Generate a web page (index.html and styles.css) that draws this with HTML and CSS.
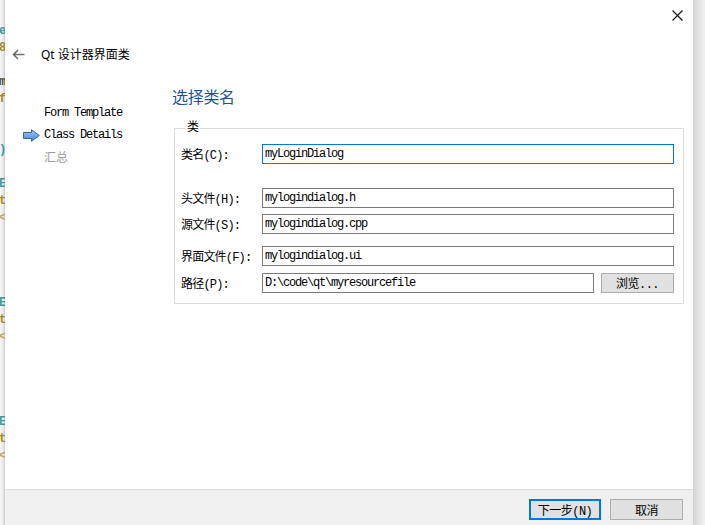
FILE: index.html
```html
<!DOCTYPE html>
<html lang="zh-CN">
<head>
<meta charset="utf-8">
<title>Qt 设计器界面类</title>
<link rel="stylesheet" href="styles.css">
</head>
<body>
<div class="screen">
  <div class="behind">
    <div class="code">
      <div class="ln c-blue">e</div>
      <div class="ln c-olive">8</div>
      <div class="ln"></div>
      <div class="ln c-dark">m</div>
      <div class="ln c-olive">f</div>
      <div class="ln"></div>
      <div class="ln"></div>
      <div class="ln c-teal">)</div>
      <div class="ln"></div>
      <div class="ln c-blue">E</div>
      <div class="ln c-olive">t</div>
      <div class="ln c-tan">&lt;</div>
      <div class="ln"></div><div class="ln"></div><div class="ln"></div><div class="ln"></div>
      <div class="ln c-blue">E</div>
      <div class="ln c-olive">t</div>
      <div class="ln c-tan">&lt;</div>
      <div class="ln"></div><div class="ln"></div><div class="ln"></div><div class="ln"></div>
      <div class="ln c-blue">E</div>
      <div class="ln c-olive">t</div>
      <div class="ln c-tan">&lt;</div>
    </div>
  </div>

  <div class="dialog">
    <div class="topbar">
      <button class="close" aria-label="关闭">
        <svg width="11" height="11" viewBox="0 0 11 11"><path d="M0.5 0.5L10.5 10.5M10.5 0.5L0.5 10.5" stroke="#111" stroke-width="1.1" fill="none"/></svg>
      </button>
    </div>

    <div class="titlebar">
      <svg class="back" width="13" height="11" viewBox="0 0 13 11"><path d="M12.5 5.5H1.5M6 1L1.5 5.5L6 10" stroke="#6e6e6e" stroke-width="1.6" fill="none"/></svg>
      <span class="title">Qt 设计器界面类</span>
    </div>

    <div class="main">
      <nav class="steps">
        <div class="step"><span class="marker"></span><span class="mono">Form Template</span></div>
        <div class="step"><span class="marker">
          <svg width="17" height="13" viewBox="0 0 17 13">
            <defs><linearGradient id="ag" x1="0" y1="0" x2="0" y2="1"><stop offset="0" stop-color="#a9cdf5"/><stop offset="1" stop-color="#3f82d8"/></linearGradient></defs>
            <path d="M0.5 3.5H8.5V0.7L16.3 6.5L8.5 12.3V9.5H0.5Z" fill="url(#ag)" stroke="#2f66b3" stroke-width="1"/>
          </svg></span><span class="mono">Class Details</span></div>
        <div class="step step-off"><span class="marker"></span><span class="mono">汇总</span></div>
      </nav>

      <section class="content">
        <h1 class="heading">选择类名</h1>
        <fieldset class="group">
          <legend class="legend mono">类</legend>
          <div class="row r1"><label class="lbl mono">类名(C):</label><div class="field focus mono">myLoginDialog</div></div>
          <div class="row r2"><label class="lbl mono">头文件(H):</label><div class="field mono">mylogindialog.h</div></div>
          <div class="row r3"><label class="lbl mono">源文件(S):</label><div class="field mono">mylogindialog.cpp</div></div>
          <div class="row r4"><label class="lbl mono">界面文件(F):</label><div class="field mono">mylogindialog.ui</div></div>
          <div class="row r5"><label class="lbl mono">路径(P):</label><div class="field mono">D:\code\qt\myresourcefile</div><button class="browse mono">浏览...</button></div>
        </fieldset>
      </section>
    </div>

    <div class="footer">
      <button class="btn btn-default mono">下一步(N)</button>
      <button class="btn mono">取消</button>
    </div>
  </div>

  <div class="shadow-r"></div>
</div>
</body>
</html>
```

FILE: styles.css
```css
* { box-sizing: border-box; }
html, body { margin: 0; padding: 0; }
body {
  width: 705px;
  height: 525px;
  overflow: hidden;
  background: #fff;
  font-family: "Noto Sans", "Noto Sans CJK SC", sans-serif;
}
.screen {
  display: flex;
  width: 705px;
  height: 525px;
}

/* background editor peeking out on the left */
.behind {
  width: 5px;
  flex: none;
  overflow: hidden;
  background: linear-gradient(to right, #f6f6f6 0, #ececec 55%, #d6d6d6 85%, #cfcfcf 100%);
}
.code {
  padding-top: 23px;
  margin-left: -1px;
  font-family: "Liberation Mono", monospace;
  font-size: 12px;
  font-weight: bold;
  opacity: .85;
}
.ln { height: 17px; line-height: 17px; }
.c-blue { color: #2a8a8a; }
.c-olive { color: #8a7a10; }
.c-dark { color: #3a2a10; }
.c-teal { color: #1d8a9a; }
.c-tan { color: #b89a50; }

.shadow-r {
  width: 12px;
  flex: none;
  background: linear-gradient(to right, #d2d2d2 0, #e2e2e2 40%, #f1f1f1 100%);
}

.dialog {
  flex: 1;
  display: flex;
  flex-direction: column;
  background: #fff;
}

.topbar {
  height: 30px;
  display: flex;
  justify-content: flex-end;
  padding: 10px 10px 0 0;
}
.close {
  border: 0;
  background: transparent;
  padding: 0;
  width: 11px;
  height: 11px;
  display: block;
}
.close svg { display: block; }

.titlebar {
  height: 48px;
  display: flex;
  align-items: center;
  padding-left: 7px;
  padding-top: 1px;
  gap: 16px;
}
.back { display: block; flex: none; }
.title {
  font-size: 12px;
  color: #000;
  font-family: "Noto Sans", "Noto Sans CJK SC", sans-serif;
  line-height: 16px;
}

.main {
  flex: 1;
  display: flex;
}
.mono {
  font-family: "Liberation Mono", "Noto Sans CJK SC", monospace;
  font-size: 12px;
  letter-spacing: -0.8px;
}
.steps {
  width: 167px;
  flex: none;
  padding: 24px 0 0 18px;
}
.step {
  display: flex;
  align-items: center;
  height: 22px;
  gap: 4px;
  color: #000;
}
.step .mono { letter-spacing: -1.2px; }
.step-off { color: #9c9c9c; }
.step-off .mono { letter-spacing: 0; }
.marker {
  width: 17px;
  height: 13px;
  flex: none;
  display: block;
}
.marker svg { display: block; }

.content {
  flex: 1;
  padding: 8px 9px 0 0;
}
.heading {
  margin: 0;
  font-weight: normal;
  font-family: "Noto Sans CJK SC", sans-serif;
  font-size: 16px;
  line-height: 20px;
  color: #1c4fa0;
  letter-spacing: -0.3px;
}
.group {
  margin: 15px 0 0 2px;
  padding: 0 9px 10px 6px;
  border: 1px solid #dcdcdc;
  min-width: 0;
}
.legend {
  margin-left: 4px;
  padding: 0 2px;
  line-height: 14px;
  height: 14px;
}
.row {
  display: flex;
  align-items: center;
  height: 20px;
}
.r1 { margin-top: 9px; }
.r2 { margin-top: 24px; }
.r3 { margin-top: 6px; }
.r4 { margin-top: 12px; }
.r5 { margin-top: 7px; }
.lbl {
  width: 81px;
  flex: none;
  color: #000;
  white-space: nowrap;
}
.field {
  flex: 1;
  height: 20px;
  border: 1px solid #7a7a7a;
  padding: 0 2px;
  line-height: 18px;
  letter-spacing: -1.2px;
  white-space: nowrap;
  overflow: hidden;
  color: #000;
}
.field.focus { border-color: #0078d7; }
.browse {
  width: 73px;
  flex: none;
  margin-left: 7px;
  height: 20px;
  background: #e1e1e1;
  border: 1px solid #adadad;
  padding: 0;
  color: #000;
  letter-spacing: -0.5px;
}

.footer {
  height: 36px;
  flex: none;
  background: #f0f0f0;
  border-top: 1px solid #dfdfdf;
  display: flex;
  justify-content: flex-end;
  align-items: flex-start;
  padding: 9px 10px 0 0;
  gap: 9px;
}
.btn {
  height: 21px;
  width: 73px;
  background: #e1e1e1;
  border: 1px solid #adadad;
  padding: 0;
  color: #000;
  letter-spacing: -0.5px;
}
.btn-default {
  width: 72px;
  border: 2px solid #0078d7;
}
```
